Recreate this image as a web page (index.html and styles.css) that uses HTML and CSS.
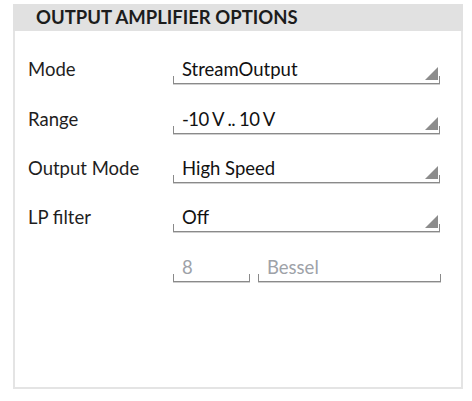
FILE: index.html
```html
<!DOCTYPE html>
<html>
<head>
<meta charset="utf-8">
<link rel="stylesheet" href="styles.css">
</head>
<body>
<div class="panel">
  <div class="panel-header">OUTPUT AMPLIFIER OPTIONS</div>
  <div class="panel-body">
    <div class="row r50">
      <span class="label">Mode</span>
      <div class="field select"><span class="value">StreamOutput</span><svg class="arrow" width="13" height="13" viewBox="0 0 13 13"><polygon points="13,0 13,13 0,13"/></svg></div>
    </div>
    <div class="row r50">
      <span class="label">Range</span>
      <div class="field select"><span class="value compact">-10 V .. 10 V</span><svg class="arrow" width="13" height="13" viewBox="0 0 13 13"><polygon points="13,0 13,13 0,13"/></svg></div>
    </div>
    <div class="row r49">
      <span class="label">Output Mode</span>
      <div class="field select"><span class="value">High Speed</span><svg class="arrow" width="13" height="13" viewBox="0 0 13 13"><polygon points="13,0 13,13 0,13"/></svg></div>
    </div>
    <div class="row r49">
      <span class="label">LP filter</span>
      <div class="field select"><span class="value">Off</span><svg class="arrow" width="13" height="13" viewBox="0 0 13 13"><polygon points="13,0 13,13 0,13"/></svg></div>
    </div>
    <div class="row r50">
      <span class="label"></span>
      <div class="pair">
        <div class="field small"><span class="value disabled">8</span></div>
        <div class="field wide"><span class="value disabled">Bessel</span></div>
      </div>
    </div>
  </div>
</div>
</body>
</html>
```
FILE: styles.css
```css
body {
  margin: 0;
  background: #ffffff;
  font-family: Lato, "Liberation Sans", sans-serif;
  color: #1e1e1e;
}
.panel {
  margin: 4px 0 0 13px;
  width: 450px;
}
.panel-header {
  height: 27px;
  box-sizing: border-box;
  background: #e1e1e1;
  padding-left: 23px;
  font-size: 18.5px;
  font-weight: 700;
  line-height: 27px;
  color: #1c1c1c;
  white-space: nowrap;
}
.panel-body {
  height: 358px;
  box-sizing: border-box;
  border: 2px solid #e4e4e4;
  border-top: 0;
  padding: 3px 0 0 13px;
}
.row {
  display: flex;
  align-items: flex-end;
}
.r50 { height: 50px; }
.r49 { height: 49px; }
.label {
  width: 145px;
  flex: none;
  font-size: 18.5px;
  line-height: 22px;
  padding-bottom: 4px;
  color: #1e1e1e;
}
.field {
  box-sizing: border-box;
  height: 25px;
  display: flex;
  align-items: flex-end;
  padding: 0 2px 3px 9px;
  border-bottom: 1px solid #8a8a8a;
  box-shadow: 0 1px 0 #cfcfcf;
  background:
    linear-gradient(#8a8a8a, #8a8a8a) left bottom / 1px 7px no-repeat,
    linear-gradient(#8a8a8a, #8a8a8a) right bottom / 1px 7px no-repeat;
}
.select { width: 267px; }
.value {
  font-size: 18.5px;
  line-height: 22px;
  color: #111;
  white-space: nowrap;
}
.value.compact {
  letter-spacing: -0.6px;
}
.value.disabled { color: #9ea2a8; }
.arrow {
  margin-left: auto;
  margin-bottom: 0;
  fill: #8c8c8c;
}
.pair {
  display: flex;
  gap: 8px;
}
.small { width: 77px; }
.wide { width: 183px; }
```
